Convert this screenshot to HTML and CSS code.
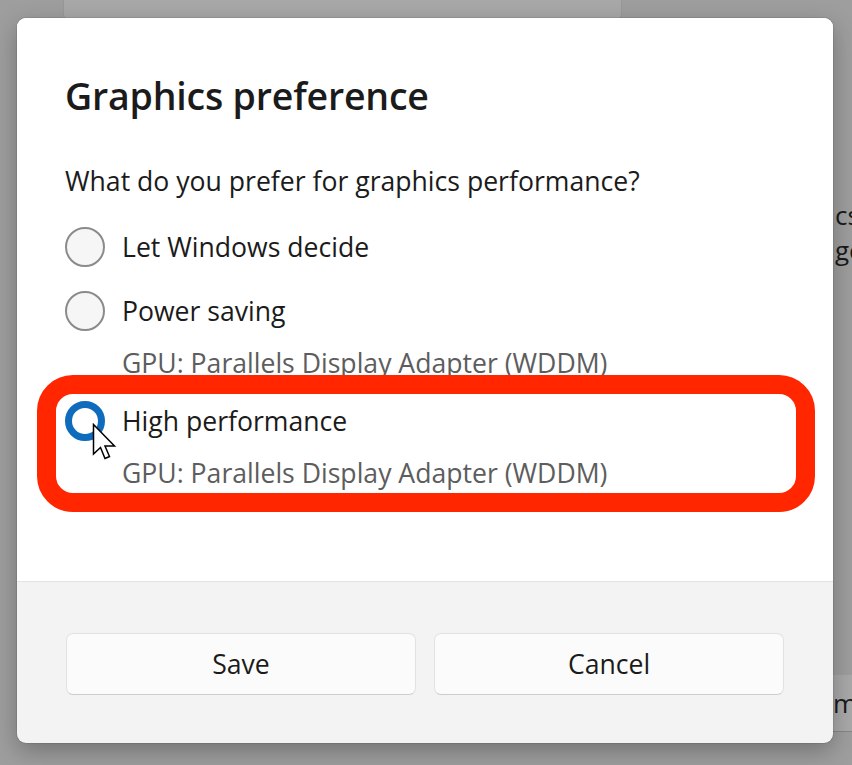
FILE: index.html
```html
<!DOCTYPE html>
<html>
<head>
<meta charset="utf-8">
<link rel="stylesheet" href="styles.css">
</head>
<body>
<div class="backdrop">
  <div class="bg-topcard"></div>
  <div class="bg-text bg-text-1">cs</div>
  <div class="bg-text bg-text-2">ge</div>
  <div class="bg-field"><span>m</span></div>
</div>

<div class="dialog">
  <div class="dialog-body">
    <h1 class="title">Graphics preference</h1>
    <p class="question">What do you prefer for graphics performance?</p>
    <div class="options">
      <div class="option">
        <span class="radio"></span>
        <div class="option-text"><div class="label">Let Windows decide</div></div>
      </div>
      <div class="option">
        <span class="radio"></span>
        <div class="option-text">
          <div class="label">Power saving</div>
          <div class="sub">GPU: Parallels Display Adapter (WDDM)</div>
        </div>
      </div>
      <div class="option option-selected">
        <span class="radio radio-on"></span>
        <div class="option-text">
          <div class="label">High performance</div>
          <div class="sub">GPU: Parallels Display Adapter (WDDM)</div>
        </div>
        <div class="highlight"></div>
        <svg class="cursor" width="28" height="40" viewBox="0 0 28 40">
          <path d="M1.5 1.5 L1.5 31 L8.5 24.5 L13 35.5 L17.5 33.5 L13 23 L22.5 23 Z" fill="#fff" stroke="#000" stroke-width="1.5" stroke-linejoin="miter"/>
        </svg>
      </div>
    </div>
  </div>
  <div class="dialog-footer">
    <button class="btn">Save</button>
    <button class="btn">Cancel</button>
  </div>
</div>
</body>
</html>
```
FILE: styles.css
```css
html, body {
  margin: 0;
  padding: 0;
}
body {
  width: 852px;
  height: 765px;
  overflow: hidden;
  background: #9d9e9d;
  font-family: "Open Sans", "Noto Sans", sans-serif;
  color: #1b1b1b;
  position: relative;
}
.backdrop {
  position: absolute;
  inset: 0;
}
.bg-topcard {
  position: absolute;
  left: 63px;
  top: -10px;
  width: 557px;
  height: 27px;
  background: #a7a8a7;
  border: 1px solid #979897;
  border-radius: 4px;
}
.bg-text {
  position: absolute;
  left: 835px;
  font-size: 26px;
  color: #1a1a1a;
  line-height: 30px;
}
.bg-text-1 { top: 200px; }
.bg-text-2 { top: 235px; }
.bg-field {
  position: absolute;
  left: 820px;
  top: 675px;
  width: 60px;
  height: 56px;
  background: #a8a9a8;
  border-bottom: 1px solid #858685;
  font-size: 26px;
  color: #1a1a1a;
}
.bg-field span {
  position: absolute;
  left: 13px;
  top: 10px;
}
.dialog {
  position: absolute;
  left: 17px;
  top: 18px;
  width: 816px;
  height: 725px;
  border-radius: 9px;
  overflow: hidden;
  background: #f3f3f3;
  box-shadow: 0 8px 24px rgba(0,0,0,0.28), 0 0 0 1px rgba(0,0,0,0.08);
  display: flex;
  flex-direction: column;
}
.dialog-body {
  background: #ffffff;
  height: 564px;
  border-bottom: 1px solid #e3e3e3;
  padding: 0 48px;
  box-sizing: border-box;
}
.title {
  margin: 0;
  padding-top: 54px;
  font-size: 37.5px;
  font-weight: 600;
  line-height: 48px;
  color: #1b1b1b;
  letter-spacing: -0.2px;
}
.question {
  margin: 44px 0 0;
  font-size: 26.6px;
  line-height: 34px;
}
.options {
  margin-top: 29px;
  display: flex;
  flex-direction: column;
  gap: 24px;
}
.option {
  display: flex;
  align-items: flex-start;
  gap: 17px;
  position: relative;
}
.option-selected {
  margin-top: -6px;
}
.radio {
  width: 40px;
  height: 40px;
  box-sizing: border-box;
  border-radius: 50%;
  border: 2px solid #8b8b8b;
  background: #f6f6f6;
  flex: none;
}
.radio-on {
  border: 7px solid #0f6cbd;
  background: #ffffff;
}
.label {
  font-size: 26.6px;
  line-height: 40px;
}
.sub {
  margin-top: 12px;
  font-size: 26.6px;
  line-height: 40px;
  color: #5d5d5d;
}
.highlight {
  position: absolute;
  left: -28px;
  top: -26px;
  width: 778px;
  height: 137px;
  box-sizing: border-box;
  border: 19px solid #ff2600;
  border-radius: 36px;
  pointer-events: none;
}
.cursor {
  position: absolute;
  left: 27px;
  top: 22px;
}
.dialog-footer {
  flex: 1;
  display: flex;
  gap: 18px;
  padding: 51px 48px 0 49px;
}
.btn {
  width: 350px;
  height: 62px;
  border-radius: 7px;
  border: 1px solid #e2e2e2;
  border-bottom-color: #cdcdcd;
  background: #fbfbfb;
  font-family: inherit;
  font-size: 26.6px;
  color: #1b1b1b;
  padding: 0;
}
```
